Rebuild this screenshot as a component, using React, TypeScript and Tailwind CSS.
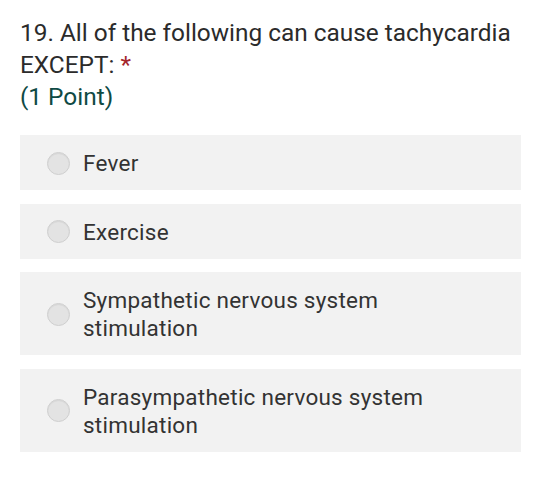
const options = [
  "Fever",
  "Exercise",
  "Sympathetic nervous system stimulation",
  "Parasympathetic nervous system stimulation",
];

function Radio() {
  return (
    <span className="w-[23px] h-[23px] shrink-0 rounded-full bg-[#e3e3e3] border border-[#cfcfcf] shadow-[inset_0_1px_1px_rgba(0,0,0,0.06)]" />
  );
}

export default function App() {
  return (
    <div className="w-[540px] h-[494px] bg-white font-['Roboto',sans-serif]">
      <div className="pl-5 pr-[19px] pt-[17px]">
        <div className="text-[24.4px] leading-[32px] text-[#2b2b2b]">
          19. All of the following can cause tachycardia
          <br />
          EXCEPT: <span className="text-[#a4262c]">*</span>
        </div>
        <div className="text-[24.4px] leading-[32px] text-[#0f4a44]">(1 Point)</div>

        <div className="mt-[22px] flex flex-col gap-[13.5px]">
          {options.map((opt) => (
            <label
              key={opt}
              className="flex items-center bg-[#f2f2f2] min-h-[55px] pt-[14px] pb-[13px] pl-[27px] pr-6"
            >
              <Radio />
              <span className="ml-[13px] text-[22.5px] tracking-[0.25px] leading-[28px] text-[#333333] max-w-[380px]">
                {opt}
              </span>
            </label>
          ))}
        </div>
      </div>
    </div>
  );
}
